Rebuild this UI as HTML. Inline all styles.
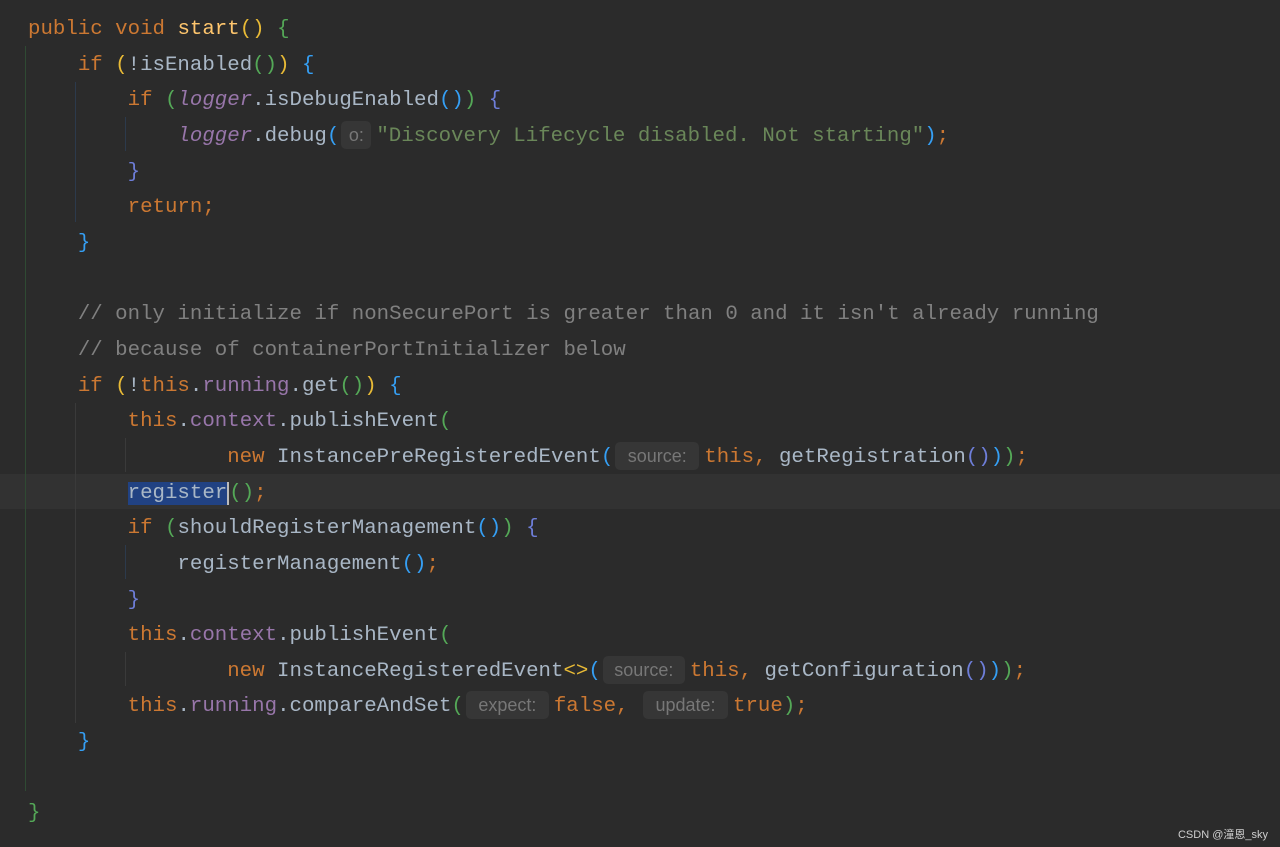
<!DOCTYPE html>
<html><head><meta charset="utf-8"><style>
html,body{margin:0;padding:0;background:#2b2b2b;width:1280px;height:847px;overflow:hidden}
.hl{position:absolute;left:0;top:474px;width:1280px;height:35px;background:#323232}
pre{position:absolute;left:28px;top:12px;margin:0;font-family:"Liberation Mono",monospace;font-size:20.75px;line-height:35.65px;color:#a9b7c6;white-space:pre}
.k{color:#cc7832}.m{color:#ffc66d}.f{color:#9876aa}.i{font-style:italic;color:#9876aa}.s{color:#6a8759}.c{color:#808080}
.y{color:#e8ba36}.g{color:#54a857}.b{color:#359ff4}.p{color:#6e7ed9}
.h{display:inline-block;height:28px;line-height:28px;vertical-align:0px;background:#363636;border-radius:5px;color:#777;font-family:"Liberation Sans",sans-serif;font-size:18px;text-align:center;margin:0 5px 0 2px;box-sizing:border-box}
.sel{background:#214283}
.cur{border-right:2px solid #bbb}
.v{position:absolute;width:1px}
.wm{position:absolute;right:12px;top:826px;color:#cfcfcf;font-family:"Liberation Sans","Noto Sans CJK SC",sans-serif;font-size:11px}
</style></head><body>
<div class="hl"></div>
<div class="v" style="left:25px;top:46px;height:745px;background:#2f4a33"></div>
<div class="v" style="left:75px;top:82px;height:140px;background:#2c3a4c"></div>
<div class="v" style="left:125px;top:117px;height:34px;background:#2c3a4c"></div>
<div class="v" style="left:75px;top:403px;height:320px;background:#3a3a3a"></div>
<div class="v" style="left:125px;top:438px;height:34px;background:#3a3a3a"></div>
<div class="v" style="left:125px;top:545px;height:34px;background:#2c3a4c"></div>
<div class="v" style="left:125px;top:652px;height:34px;background:#3a3a3a"></div>
<pre><span class="k">public void </span><span class="m">start</span><span class="y">()</span> <span class="g">{</span>
    <span class="k">if </span><span class="y">(</span>!isEnabled<span class="g">()</span><span class="y">)</span> <span class="b">{</span>
        <span class="k">if </span><span class="g">(</span><span class="i">logger</span>.isDebugEnabled<span class="b">()</span><span class="g">)</span> <span class="p">{</span>
            <span class="i">logger</span>.debug<span class="b">(</span><span class="h" style="width:30px">o:</span><span class="s">"Discovery Lifecycle disabled. Not starting"</span><span class="b">)</span><span class="k">;</span>
        <span class="p">}</span>
        <span class="k">return;</span>
    <span class="b">}</span>

    <span class="c">// only initialize if nonSecurePort is greater than 0 and it isn't already running</span>
    <span class="c">// because of containerPortInitializer below</span>
    <span class="k">if </span><span class="y">(</span>!<span class="k">this</span>.<span class="f">running</span>.get<span class="g">()</span><span class="y">)</span> <span class="b">{</span>
        <span class="k">this</span>.<span class="f">context</span>.publishEvent<span class="g">(</span>
                <span class="k">new </span>InstancePreRegisteredEvent<span class="b">(</span><span class="h" style="width:84px">source:</span><span class="k">this, </span>getRegistration<span class="p">()</span><span class="b">)</span><span class="g">)</span><span class="k">;</span>
        <span class="sel cur">register</span><span class="g">()</span><span class="k">;</span>
        <span class="k">if </span><span class="g">(</span>shouldRegisterManagement<span class="b">()</span><span class="g">)</span> <span class="p">{</span>
            registerManagement<span class="b">()</span><span class="k">;</span>
        <span class="p">}</span>
        <span class="k">this</span>.<span class="f">context</span>.publishEvent<span class="g">(</span>
                <span class="k">new </span>InstanceRegisteredEvent<span class="y">&lt;&gt;</span><span class="b">(</span><span class="h" style="width:82px">source:</span><span class="k">this, </span>getConfiguration<span class="p">()</span><span class="b">)</span><span class="g">)</span><span class="k">;</span>
        <span class="k">this</span>.<span class="f">running</span>.compareAndSet<span class="g">(</span><span class="h" style="width:83px">expect:</span><span class="k">false, </span><span class="h" style="width:85px">update:</span><span class="k">true</span><span class="g">)</span><span class="k">;</span>
    <span class="b">}</span>

<span class="g">}</span></pre>
<div class="wm">CSDN @潼恩_sky</div>
</body></html>
